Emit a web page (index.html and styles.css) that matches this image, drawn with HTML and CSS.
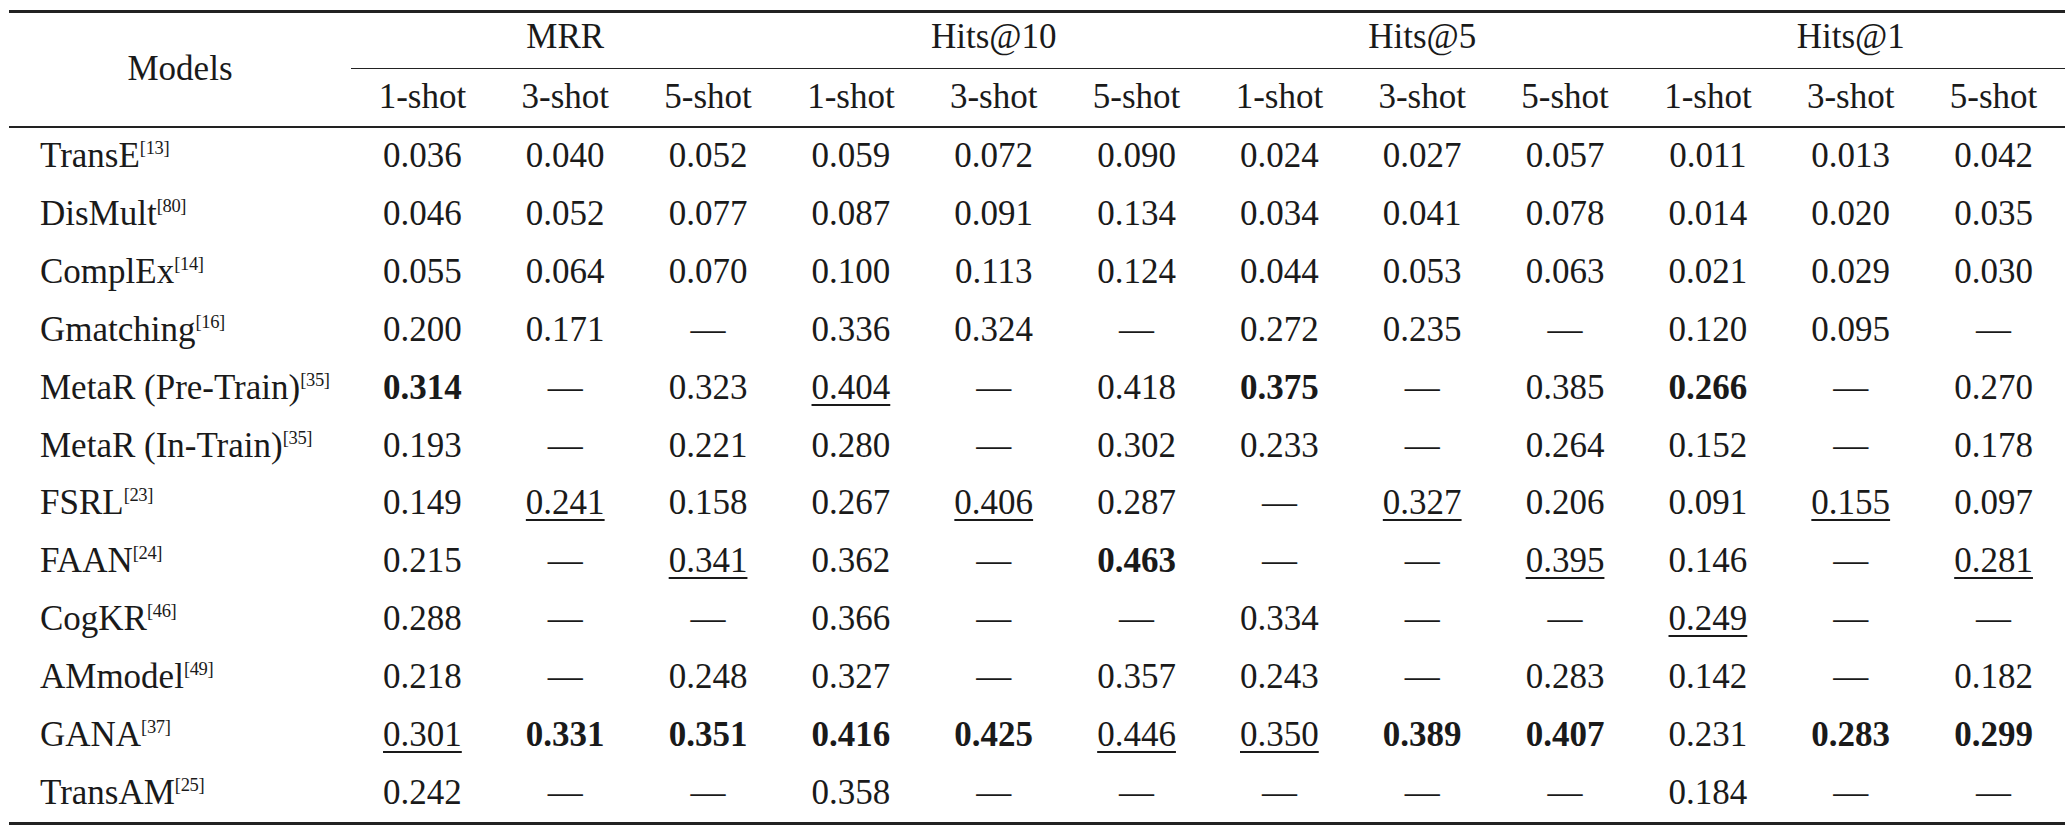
FILE: index.html
```html
<!DOCTYPE html>
<html lang="en">
<head>
<meta charset="utf-8">
<title>Few-shot KG completion results</title>
<link rel="stylesheet" href="styles.css">
</head>
<body>
<div class="page">
<table class="results">
  <colgroup>
    <col class="col-model">
    <col class="col-val"><col class="col-val"><col class="col-val">
    <col class="col-val"><col class="col-val"><col class="col-val">
    <col class="col-val"><col class="col-val"><col class="col-val">
    <col class="col-val"><col class="col-val"><col class="col-val">
  </colgroup>
  <thead>
    <tr>
      <th class="models" rowspan="2">Models</th>
      <th class="group" colspan="3"><div class="group-label">MRR</div></th>
      <th class="group" colspan="3"><div class="group-label">Hits@10</div></th>
      <th class="group" colspan="3"><div class="group-label">Hits@5</div></th>
      <th class="group" colspan="3"><div class="group-label">Hits@1</div></th>
    </tr>
    <tr>
      <th class="sub">1-shot</th><th class="sub">3-shot</th><th class="sub">5-shot</th>
      <th class="sub">1-shot</th><th class="sub">3-shot</th><th class="sub">5-shot</th>
      <th class="sub">1-shot</th><th class="sub">3-shot</th><th class="sub">5-shot</th>
      <th class="sub">1-shot</th><th class="sub">3-shot</th><th class="sub">5-shot</th>
    </tr>
  </thead>
  <tbody>
    <tr><td class="name">TransE<sup>[13]</sup></td><td>0.036</td><td>0.040</td><td>0.052</td><td>0.059</td><td>0.072</td><td>0.090</td><td>0.024</td><td>0.027</td><td>0.057</td><td>0.011</td><td>0.013</td><td>0.042</td></tr>
    <tr><td class="name">DisMult<sup>[80]</sup></td><td>0.046</td><td>0.052</td><td>0.077</td><td>0.087</td><td>0.091</td><td>0.134</td><td>0.034</td><td>0.041</td><td>0.078</td><td>0.014</td><td>0.020</td><td>0.035</td></tr>
    <tr><td class="name">ComplEx<sup>[14]</sup></td><td>0.055</td><td>0.064</td><td>0.070</td><td>0.100</td><td>0.113</td><td>0.124</td><td>0.044</td><td>0.053</td><td>0.063</td><td>0.021</td><td>0.029</td><td>0.030</td></tr>
    <tr><td class="name">Gmatching<sup>[16]</sup></td><td>0.200</td><td>0.171</td><td>—</td><td>0.336</td><td>0.324</td><td>—</td><td>0.272</td><td>0.235</td><td>—</td><td>0.120</td><td>0.095</td><td>—</td></tr>
    <tr><td class="name">MetaR (Pre-Train)<sup>[35]</sup></td><td><b>0.314</b></td><td>—</td><td>0.323</td><td><u>0.404</u></td><td>—</td><td>0.418</td><td><b>0.375</b></td><td>—</td><td>0.385</td><td><b>0.266</b></td><td>—</td><td>0.270</td></tr>
    <tr><td class="name">MetaR (In-Train)<sup>[35]</sup></td><td>0.193</td><td>—</td><td>0.221</td><td>0.280</td><td>—</td><td>0.302</td><td>0.233</td><td>—</td><td>0.264</td><td>0.152</td><td>—</td><td>0.178</td></tr>
    <tr><td class="name">FSRL<sup>[23]</sup></td><td>0.149</td><td><u>0.241</u></td><td>0.158</td><td>0.267</td><td><u>0.406</u></td><td>0.287</td><td>—</td><td><u>0.327</u></td><td>0.206</td><td>0.091</td><td><u>0.155</u></td><td>0.097</td></tr>
    <tr><td class="name">FAAN<sup>[24]</sup></td><td>0.215</td><td>—</td><td><u>0.341</u></td><td>0.362</td><td>—</td><td><b>0.463</b></td><td>—</td><td>—</td><td><u>0.395</u></td><td>0.146</td><td>—</td><td><u>0.281</u></td></tr>
    <tr><td class="name">CogKR<sup>[46]</sup></td><td>0.288</td><td>—</td><td>—</td><td>0.366</td><td>—</td><td>—</td><td>0.334</td><td>—</td><td>—</td><td><u>0.249</u></td><td>—</td><td>—</td></tr>
    <tr><td class="name">AMmodel<sup>[49]</sup></td><td>0.218</td><td>—</td><td>0.248</td><td>0.327</td><td>—</td><td>0.357</td><td>0.243</td><td>—</td><td>0.283</td><td>0.142</td><td>—</td><td>0.182</td></tr>
    <tr><td class="name">GANA<sup>[37]</sup></td><td><u>0.301</u></td><td><b>0.331</b></td><td><b>0.351</b></td><td><b>0.416</b></td><td><b>0.425</b></td><td><u>0.446</u></td><td><u>0.350</u></td><td><b>0.389</b></td><td><b>0.407</b></td><td>0.231</td><td><b>0.283</b></td><td><b>0.299</b></td></tr>
    <tr><td class="name">TransAM<sup>[25]</sup></td><td>0.242</td><td>—</td><td>—</td><td>0.358</td><td>—</td><td>—</td><td>—</td><td>—</td><td>—</td><td>0.184</td><td>—</td><td>—</td></tr>
  </tbody>
</table>
</div>
</body>
</html>
```
FILE: styles.css
```css
html, body {
  margin: 0;
  padding: 0;
  background: #ffffff;
}

.page {
  padding: 10px 0 0 9px;
}

.results {
  width: 2056px;
  table-layout: fixed;
  border-collapse: separate;
  border-spacing: 0;
  border-top: 3px solid #222222;
  border-bottom: 3px solid #222222;
  font-family: "Liberation Serif", "Times New Roman", serif;
  font-size: 35px;
  color: #1a1a1a;
}

.col-model {
  width: 342px;
}

.col-val {
  width: 142.83px;
}

.results th {
  font-weight: normal;
  padding: 0;
  text-align: center;
}

.models {
  vertical-align: middle;
  border-bottom: 2px solid #222222;
  line-height: 40px;
}

.group {
  padding: 0 7.5px;
  vertical-align: bottom;
}

.group-label {
  padding: 0 0 7px;
  line-height: 48px;
  border-bottom: 1.5px solid #222222;
}

.sub {
  line-height: 56.5px;
  border-bottom: 2px solid #222222;
}

.results td {
  height: 57.85px;
  padding: 0;
  line-height: 40px;
  text-align: center;
  vertical-align: middle;
  white-space: nowrap;
}

.results td.name {
  text-align: left;
  padding-left: 31px;
}

.results sup {
  font-size: 0.53em;
  line-height: 0;
  vertical-align: 0.72em;
  letter-spacing: -0.02em;
}

.results b {
  font-weight: bold;
}

.results u {
  text-decoration: underline;
  text-decoration-thickness: 1.5px;
  text-underline-offset: 5px;
}
```
